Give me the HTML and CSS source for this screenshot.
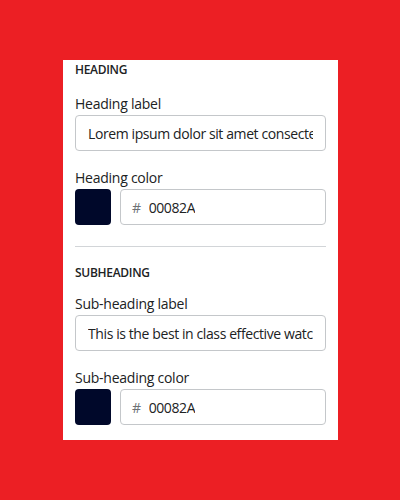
FILE: index.html
```html
<!DOCTYPE html>
<html>
<head>
<meta charset="utf-8">
<link rel="stylesheet" href="styles.css">
</head>
<body>
<div class="panel">
  <div class="section-title heading-title">Heading</div>
  <div class="field">
    <label class="label">Heading label</label>
    <div class="input"><span class="value">Lorem ipsum dolor sit amet consectetur adipiscing</span></div>
  </div>
  <div class="field">
    <label class="label">Heading color</label>
    <div class="color-row">
      <div class="swatch"></div>
      <div class="input"><span class="hash">#</span><span class="value">00082A</span></div>
    </div>
  </div>
  <hr class="divider">
  <div class="section-title sub-title">Subheading</div>
  <div class="field">
    <label class="label">Sub-heading label</label>
    <div class="input"><span class="value">This is the best in class effective watch for everyone</span></div>
  </div>
  <div class="field">
    <label class="label">Sub-heading color</label>
    <div class="color-row">
      <div class="swatch"></div>
      <div class="input"><span class="hash">#</span><span class="value">00082A</span></div>
    </div>
  </div>
</div>
</body>
</html>
```
FILE: styles.css
```css
html, body {
  margin: 0;
  padding: 0;
}
body {
  background: #ec1f24;
  width: 400px;
  height: 500px;
  overflow: hidden;
  font-family: "Open Sans", "Noto Sans", sans-serif;
  color: #202223;
}
.panel {
  box-sizing: border-box;
  margin: 60px 0 0 63px;
  width: 275px;
  height: 380px;
  background: #ffffff;
  padding: 2px 12px 13px;
}
.section-title {
  font-size: 12px;
  line-height: 16px;
  font-weight: 600;
  text-transform: uppercase;
  letter-spacing: -0.3px;
}
.heading-title {
  margin-bottom: 16px;
}
.sub-title {
  margin-bottom: 13px;
}
.field + .field {
  margin-top: 17px;
}
.label {
  display: block;
  font-size: 14px;
  line-height: 20px;
  margin-bottom: 1px;
  letter-spacing: -0.25px;
}
.input {
  box-sizing: border-box;
  height: 36px;
  border: 1px solid #c4c7ca;
  border-radius: 4px;
  padding: 0 12px;
  display: flex;
  align-items: center;
  gap: 8px;
  font-size: 14px;
  overflow: hidden;
  white-space: nowrap;
  flex: 1;
  min-width: 0;
  letter-spacing: -0.4px;
}
.color-row .input {
  padding-left: 11px;
}
.value {
  overflow: hidden;
}
.hash {
  color: #6d7175;
}
.color-row {
  display: flex;
  gap: 9px;
}
.swatch {
  width: 36px;
  height: 36px;
  border-radius: 4px;
  background: #00082a;
  flex: none;
}
.divider {
  border: 0;
  border-top: 1px solid #d2d5d8;
  margin: 21px 0 18px;
}
```
